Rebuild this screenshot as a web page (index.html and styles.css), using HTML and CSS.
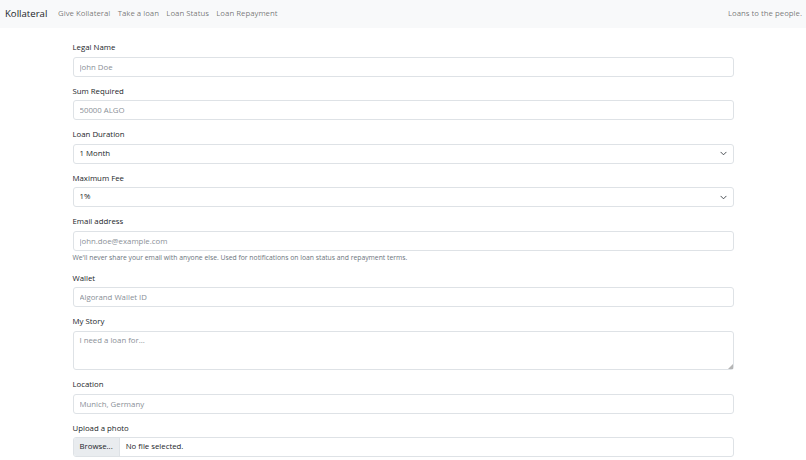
FILE: index.html
```html
<!DOCTYPE html>
<html lang="en">
<head>
<meta charset="utf-8">
<title>Kollateral</title>
<link rel="stylesheet" href="styles.css">
</head>
<body>
<nav class="navbar">
  <a class="brand" href="#">Kollateral</a>
  <ul class="nav">
    <li><a class="nav-link" href="#">Give Kollateral</a></li>
    <li><a class="nav-link" href="#">Take a loan</a></li>
    <li><a class="nav-link" href="#">Loan Status</a></li>
    <li><a class="nav-link" href="#">Loan Repayment</a></li>
  </ul>
  <span class="navbar-text">Loans to the people.</span>
</nav>
<main class="container">
  <form class="form">
    <div class="group">
      <label class="label">Legal Name</label>
      <input class="control" type="text" placeholder="John Doe">
    </div>
    <div class="group">
      <label class="label">Sum Required</label>
      <input class="control" type="text" placeholder="50000 ALGO">
    </div>
    <div class="group">
      <label class="label">Loan Duration</label>
      <div class="select-wrap">
        <select class="control select"><option>1 Month</option></select>
        <svg class="chevron" viewBox="0 0 16 16" width="7" height="7"><path d="M2 5l6 6 6-6" fill="none" stroke="#343a40" stroke-width="2" stroke-linecap="round" stroke-linejoin="round"/></svg>
      </div>
    </div>
    <div class="group">
      <label class="label">Maximum Fee</label>
      <div class="select-wrap">
        <select class="control select"><option>1%</option></select>
        <svg class="chevron" viewBox="0 0 16 16" width="7" height="7"><path d="M2 5l6 6 6-6" fill="none" stroke="#343a40" stroke-width="2" stroke-linecap="round" stroke-linejoin="round"/></svg>
      </div>
    </div>
    <div class="group">
      <label class="label">Email address</label>
      <input class="control" type="email" placeholder="john.doe@example.com">
      <div class="help">We'll never share your email with anyone else. Used for notifications on loan status and repayment terms.</div>
    </div>
    <div class="group">
      <label class="label">Wallet</label>
      <input class="control" type="text" placeholder="Algorand Wallet ID">
    </div>
    <div class="group">
      <label class="label">My Story</label>
      <div class="textarea-wrap">
        <textarea class="control textarea" placeholder="I need a loan for..."></textarea>
        <span class="grip"></span>
      </div>
    </div>
    <div class="group">
      <label class="label">Location</label>
      <input class="control" type="text" placeholder="Munich, Germany">
    </div>
    <div class="group">
      <label class="label">Upload a photo</label>
      <div class="control file">
        <span class="file-btn">Browse...</span>
        <span class="file-name">No file selected.</span>
      </div>
    </div>
  </form>
</main>
</body>
</html>
```
FILE: styles.css
```css
* { box-sizing: border-box; }
html, body { margin: 0; padding: 0; }
body {
  font-family: "Open Sans", "Noto Sans", sans-serif;
  font-size: 7.8px;
  line-height: 1.5;
  color: #212529;
  background: #fff;
}
a { text-decoration: none; }

.navbar {
  display: flex;
  align-items: center;
  height: 28px;
  padding: 0 4px 0 5px;
  background: #f8f9fa;
}
.brand {
  font-size: 9.6px;
  color: #212529;
  margin-right: 7px;
}
.nav {
  display: flex;
  list-style: none;
  margin: 0;
  padding: 0;
  flex: 1;
}
.nav-link {
  display: block;
  padding: 0 3.7px;
  color: rgba(0,0,0,.55);
}
.navbar-text { color: rgba(0,0,0,.55); }

.container {
  width: 661px;
  margin: 0 auto;
  padding-top: 13px;
}
.group { margin-bottom: 8px; }
.label {
  display: block;
  height: 12px;
  line-height: 12px;
  margin-bottom: 3.5px;
}
.control {
  display: block;
  width: 100%;
  height: 20px;
  padding: 0 6px;
  font: inherit;
  color: #212529;
  background: #fff;
  border: 1px solid #dee2e6;
  border-radius: 3px;
  outline: none;
}
.control::placeholder { color: #8a9097; opacity: 1; }
.select-wrap, .textarea-wrap { position: relative; }
.select { appearance: none; -webkit-appearance: none; }
.chevron { position: absolute; right: 7px; top: 6.5px; }
.help {
  margin-top: 2.5px;
  font-size: 6.8px;
  line-height: 10.5px;
  color: #6c757d;
}
.textarea {
  height: 39.5px;
  padding: 3px 6px;
  resize: none;
  line-height: 1.5;
}
.grip {
  position: absolute;
  right: 1px;
  bottom: 1px;
  width: 0;
  height: 0;
  border-left: 5px solid transparent;
  border-bottom: 5px solid #b5b5b5;
}
.file {
  display: flex;
  align-items: stretch;
  padding: 0;
  overflow: hidden;
}
.file-btn {
  display: flex;
  align-items: center;
  padding: 0 6px;
  background: #e9ecef;
  border-right: 1px solid #dee2e6;
}
.file-name {
  display: flex;
  align-items: center;
  padding: 0 6px;
}
```
